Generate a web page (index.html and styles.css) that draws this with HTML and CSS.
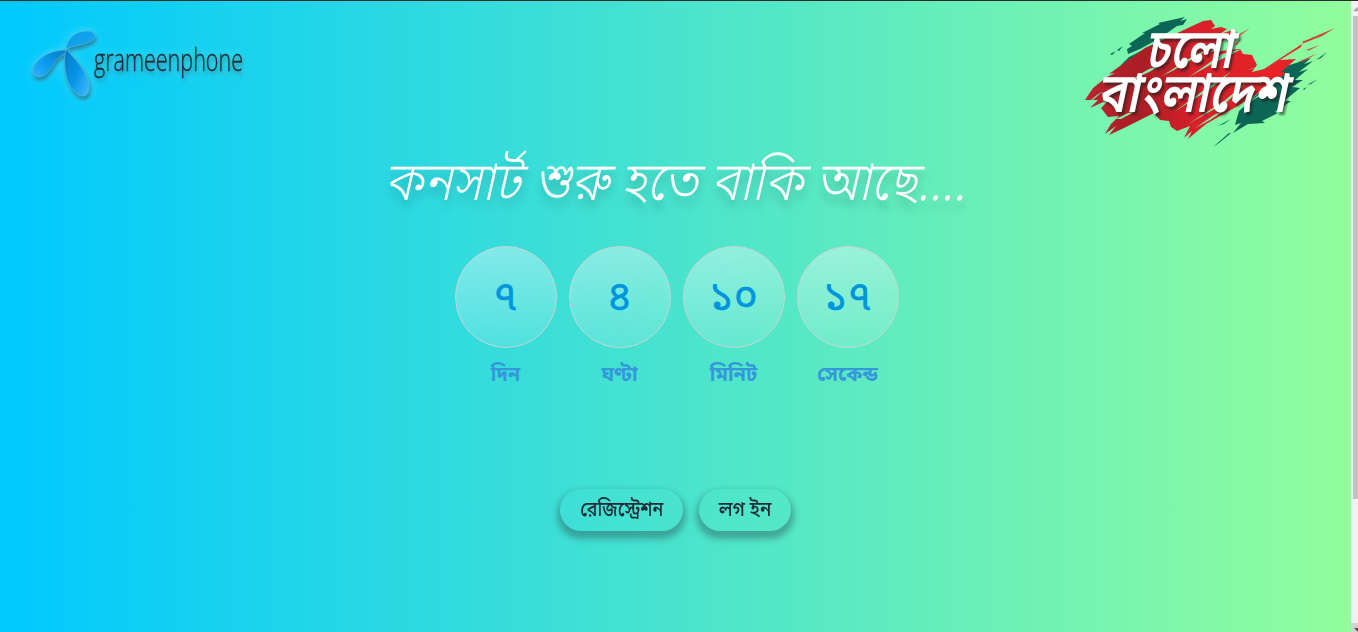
FILE: index.html
```html
<!DOCTYPE html>
<html lang="bn">
<head>
<meta charset="utf-8">
<title>Grameenphone Concert</title>
<link rel="stylesheet" href="styles.css">
</head>
<body>
<div class="page">
  <header class="header">
    <svg class="gp-logo" viewBox="0 0 240 100" role="img" aria-label="grameenphone">
      <defs>
        <linearGradient id="petalTop" x1="0" y1="0" x2="1" y2="1"><stop offset="0" stop-color="#0c9be4"/><stop offset="1" stop-color="#14a9f0"/></linearGradient>
        <linearGradient id="petalLeft" x1="0" y1="1" x2="1" y2="0"><stop offset="0" stop-color="#30b4fa"/><stop offset=".45" stop-color="#0a9cee"/><stop offset="1" stop-color="#067cc8"/></linearGradient>
        <linearGradient id="petalDown" x1="0" y1="0" x2="1" y2=".8"><stop offset="0" stop-color="#0678c5"/><stop offset=".55" stop-color="#0694e8"/><stop offset="1" stop-color="#38b6fb"/></linearGradient>
      </defs>
      <g stroke="#65bcd8" stroke-width=".6">
        <path fill="url(#petalTop)" d="M46 33C47 22 56 15 67 15C75 15 77 20 73 24C66 29 56 29 46 33Z"/>
        <path fill="url(#petalLeft)" d="M46 34C38 34 25 36 16 47C10 54 12 61 19 61C32 60 31 43 46 37Z"/>
        <path fill="url(#petalDown)" d="M46 33C54 42 67 55 69 68C70 77 67 81 61 80C49 76 41 53 46 33Z"/>
      </g>
      <text class="gp-word" x="74" y="54.5" textLength="149" lengthAdjust="spacingAndGlyphs">grameenphone</text>
    </svg>
    <svg class="event-logo" viewBox="1070 0 280 160" role="img" aria-label="চলো বাংলাদেশ">
      <defs>
        <linearGradient id="brush" gradientUnits="userSpaceOnUse" x1="1085" y1="0" x2="1270" y2="0"><stop offset="0" stop-color="#b92630"/><stop offset=".3" stop-color="#a91e25"/><stop offset=".6" stop-color="#d8202a"/><stop offset="1" stop-color="#e62328"/></linearGradient>
      </defs>
      <g fill="#0b6656">
        <path d="M1128 54L1127 49L1132 46L1129 44L1145 33L1142 33L1160 24L1158 23L1176 19L1185 17L1180 21L1187 19L1183 25L1177 26L1160 38L1140 49Z"/>
        <path d="M1121 65L1129 57L1145 49L1150 52L1126 65ZM1110 54L1116 51L1112 55ZM1117 50L1123 46L1119 51Z"/>
        <path d="M1235 125L1239 111L1262 90L1283 67L1296 63L1311 58L1304 64L1313 61L1299 72L1308 69L1295 80L1303 80L1292 87L1300 88L1284 101L1291 101L1275 112L1278 113L1262 121L1265 123L1248 124L1233 133L1241 123Z"/>
        <path d="M1213 147L1229 133L1231 133L1219 143ZM1218 126L1231 119L1224 124ZM1307 85L1318 79L1311 84ZM1316 60L1327 52L1321 58ZM1303 89L1307 87L1304 90Z"/>
      </g>
      <path fill="url(#brush)" d="M1085 100L1093 88L1107 77L1115 73L1109 74L1145 48L1203 21L1211 20L1215 26L1211 29L1221 27L1227 29L1220 34L1236 29L1222 42L1210 52L1240 49L1243 54L1252 55L1257 65L1252 72L1264 69L1302 44L1301 47L1280 60L1296 59L1281 72L1286 73L1254 96L1236 107L1206 124L1188 139L1192 131L1184 138L1190 126L1177 131L1171 127L1169 121L1160 120L1154 113L1124 128L1109 135L1116 126L1105 134L1111 124L1119 116L1108 117L1101 108L1110 99L1090 108L1098 100Z"/>
      <g fill="#cf432f"><path d="M1302 42L1335 28L1322 36L1303 43.5ZM1306 50L1320 45L1309 50.5ZM1298 62L1318 53L1304 61ZM1233 38L1250 28L1237 38ZM1234 45L1241 39L1237 45Z"/></g>
      <g fill="#82f5aa">
        <path d="M1128 82L1147 70L1170 60L1150 71.500ZM1162 76L1190 58L1224 41L1196 57L1174 70ZM1189 77L1222 54L1242 49L1210 65ZM1174 112L1207 88L1232 71L1210 89ZM1188 124L1224 101L1247 82L1227 102ZM1246 70L1268 66L1290 53L1271 64ZM1236 111L1260 94L1282 79L1261 95ZM1085 105L1097 95L1103 91L1094 99ZM1116 119L1128 113L1134 112L1121 119ZM1195 128L1214 115L1226 109L1210 120Z"/>
      </g>
      <g class="event-word">
        <text transform="translate(1145 68) scale(1 1.18)" textLength="87" lengthAdjust="spacingAndGlyphs">চলো</text>
        <text transform="translate(1097 112) scale(1 1.18)" textLength="189" lengthAdjust="spacingAndGlyphs">বাংলাদেশ</text>
      </g>
    </svg>
  </header>
  <main class="main">
    <h1 class="title">কনসার্ট শুরু হতে বাকি আছে....</h1>
    <div class="countdown">
      <div class="unit"><div class="circle">৭</div><div class="label">দিন</div></div>
      <div class="unit"><div class="circle">৪</div><div class="label">ঘণ্টা</div></div>
      <div class="unit"><div class="circle">১০</div><div class="label">মিনিট</div></div>
      <div class="unit"><div class="circle">১৭</div><div class="label">সেকেন্ড</div></div>
    </div>
    <nav class="actions">
      <a class="btn btn-register"><span class="btn-text">রেজিস্ট্রেশন</span></a>
      <a class="btn btn-login"><span class="btn-text">লগ ইন</span></a>
    </nav>
  </main>
</div>
<div class="scrollbar"><svg class="arrow" viewBox="0 0 7 16"><path fill="#a3a3a3" d="M2 11L7 6V11Z"/></svg><div class="thumb"></div><svg class="arrow arrow-down" viewBox="0 0 7 9"><path fill="#505050" d="M3 5H7V9Z"/></svg></div>
</body>
</html>
```
FILE: styles.css
```css
* { box-sizing: border-box; }
body {
  margin: 0;
  height: 632px;
  display: flex;
  overflow: hidden;
  border-top: 1px solid #2b2b2b;
  font-family: "Noto Sans Bengali", "Noto Sans", sans-serif;
}
.page { width: 1351px; height: 631px; background: linear-gradient(to right, #00c9ff, #92fe9d); }
.header { height: 145px; display: flex; justify-content: space-between; }
.gp-logo { overflow: visible; width: 240px; height: 100px; margin: 15px 0 0 20px; filter: drop-shadow(1px 3px 2px rgba(20, 70, 90, .6)) drop-shadow(0 0 5px rgba(150, 240, 255, .5)); }
.gp-word { font-family: "Open Sans", sans-serif; font-size: 31px; font-weight: 300; fill: #202a30; stroke: #202a30; stroke-width: .3px; }
.event-logo { width: 280px; height: 160px; margin: -1px 1px 0 0; }
.event-word { font-size: 47px; font-weight: 600; font-style: italic; fill: #fff; filter: drop-shadow(2px 3px 1px rgba(30, 30, 30, .6)); }
.main { display: flex; flex-direction: column; align-items: center; }
.title { margin: 0 2px 0 0; height: 100px; line-height: 81px; color: #fff; font-size: 54px; font-weight: 300; font-style: italic; white-space: nowrap; text-shadow: 0 8px 10px rgba(0, 0, 0, .2); transform: scaleX(.912); }
.countdown { display: flex; gap: 12px; height: 243px; padding-left: 2px; }
.unit { width: 102px; text-align: center; }
.circle { height: 102px; padding-top: 5px; border: 1px solid #c8d4d5; border-radius: 50%; background: linear-gradient(170deg, rgba(255, 255, 255, .4), rgba(255, 255, 255, .1)); display: flex; align-items: center; justify-content: center; color: #0096de; font-size: 41px; font-weight: 500; }
.label { line-height: 56px; font-size: 20px; font-weight: 700; color: #3498db; }
.actions { display: flex; gap: 16px; }
.btn { height: 42px; padding-top: 2px; border-radius: 21px; display: flex; align-items: center; justify-content: center; font-size: 20px; font-weight: 500; color: #212b38; box-shadow: 0 5px 6px 3px rgba(45, 90, 90, .45); }
.btn-text { transform: scaleX(.89); }
.btn-register { width: 123px; }
.btn-login { width: 92px; }
.btn-login .btn-text { transform: scaleX(.94); }
.scrollbar { width: 7px; height: 631px; background: #f1f1f1; display: flex; flex-direction: column; }
.arrow { width: 7px; height: 15px; }
.thumb { height: 483px; margin-left: 2px; background: #c1c1c1; }
.arrow-down { height: 9px; margin-top: auto; background: #d2d2d2; }
```
